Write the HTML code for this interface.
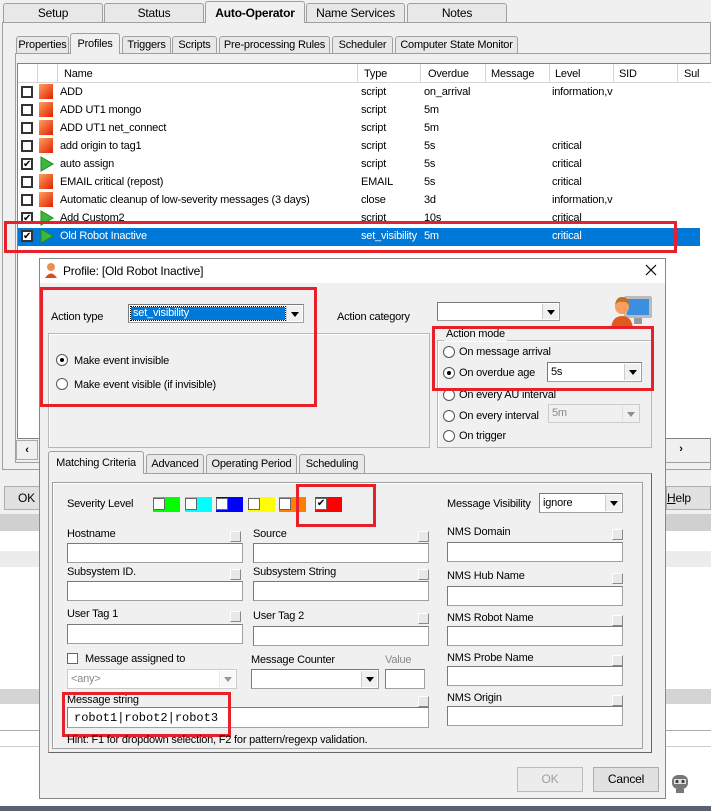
<!DOCTYPE html>
<html><head><meta charset="utf-8"><style>
*{box-sizing:border-box;margin:0;padding:0}
body{width:711px;height:811px;overflow:hidden;background:#f0f0f0;font-family:"Liberation Sans",sans-serif;font-size:11px;letter-spacing:-0.2px;color:#000;position:relative}
.a{position:absolute}
.t{position:absolute;white-space:nowrap;line-height:14px}
.tab{position:absolute;border:1px solid #a0a0a0;border-bottom:none;background:#e8e8e8;text-align:center;border-radius:3px 3px 0 0;white-space:nowrap;overflow:hidden}
.inp{position:absolute;background:#fff;border:1px solid #a0a0a0;border-top-color:#7a7a7a;border-left-color:#7a7a7a}
.cb{position:absolute;width:11px;height:11px;border:1px solid #333;background:#fff}
.sq{position:absolute;width:11px;height:11px;background:#e8e8e8;border:1px solid #fff;border-right-color:#888;border-bottom-color:#888}
.arr{position:absolute;top:1px;right:1px;bottom:1px;width:16px;background:#f0f0f0;border-left:1px solid #ccc}
.arr:after{content:"";position:absolute;left:4px;top:50%;margin-top:-2px;border:4px solid transparent;border-top:5px solid #000;border-bottom:none}
.rad{position:absolute;width:12px;height:12px;border-radius:50%;border:1px solid #555;background:#fff}
.rad.on:after{content:"";position:absolute;left:3px;top:3px;width:4px;height:4px;border-radius:50%;background:#000}
.red{position:absolute;border:3px solid #e8202a}
.row{position:absolute;left:18px;width:682px;height:18px}
.grp{position:absolute;border:1px solid #b8b8b8;box-shadow:1px 1px 0 #fff inset}
.btn{position:absolute;background:#e1e1e1;border:1px solid #adadad;text-align:center;line-height:23px;white-space:nowrap}
</style></head><body>
<!-- top tabs -->
<div class="a" style="left:2px;top:22px;width:709px;height:448px;border:1px solid #a0a0a0;background:#f0f0f0"></div>
<div class="tab" style="left:3px;top:3px;width:100px;height:19px;line-height:18px;font-size:12px">Setup</div>
<div class="tab" style="left:104px;top:3px;width:100px;height:19px;line-height:18px;font-size:12px">Status</div>
<div class="tab" style="left:407px;top:3px;width:100px;height:19px;line-height:18px;font-size:12px">Notes</div>
<div class="tab" style="left:306px;top:3px;width:99px;height:19px;line-height:18px;font-size:12px">Name Services</div>
<div class="tab" style="left:205px;top:1px;width:100px;height:22px;background:#f0f0f0;font-weight:bold;line-height:22px;font-size:12px;z-index:2">Auto-Operator</div>
<!-- sub tabs -->
<div class="a" style="left:15px;top:53px;width:696px;height:410px;border:1px solid #a0a0a0;border-right:none"></div>
<div class="tab" style="left:16px;top:36px;width:53px;height:17px;line-height:16px">Properties</div>
<div class="tab" style="left:70px;top:33px;width:50px;height:21px;background:#f0f0f0;line-height:20px;z-index:2">Profiles</div>
<div class="tab" style="left:122px;top:36px;width:49px;height:17px;line-height:16px">Triggers</div>
<div class="tab" style="left:172px;top:36px;width:45px;height:17px;line-height:16px">Scripts</div>
<div class="tab" style="left:219px;top:36px;width:111px;height:17px;line-height:16px">Pre-processing Rules</div>
<div class="tab" style="left:332px;top:36px;width:61px;height:17px;line-height:16px">Scheduler</div>
<div class="tab" style="left:395px;top:36px;width:123px;height:17px;line-height:16px">Computer State Monitor</div>
<!-- list -->
<div class="a" style="left:17px;top:63px;width:694px;height:376px;background:#fff;border:1px solid #828282;border-right:none"></div>
<div class="a" style="left:18px;top:64px;width:693px;height:19px;background:#fff;border-bottom:1px solid #d5d5d5"></div>
<div class="a" style="left:37px;top:64px;width:1px;height:19px;background:#d5d5d5"></div>
<div class="a" style="left:57px;top:64px;width:1px;height:19px;background:#d5d5d5"></div>
<div class="t" style="left:64px;top:67px">Name</div>
<div class="a" style="left:357px;top:64px;width:1px;height:19px;background:#d5d5d5"></div><div class="t" style="left:364px;top:67px">Type</div>
<div class="a" style="left:420px;top:64px;width:1px;height:19px;background:#d5d5d5"></div><div class="t" style="left:428px;top:67px">Overdue</div>
<div class="a" style="left:485px;top:64px;width:1px;height:19px;background:#d5d5d5"></div><div class="t" style="left:491px;top:67px">Message</div>
<div class="a" style="left:549px;top:64px;width:1px;height:19px;background:#d5d5d5"></div><div class="t" style="left:555px;top:67px">Level</div>
<div class="a" style="left:613px;top:64px;width:1px;height:19px;background:#d5d5d5"></div><div class="t" style="left:619px;top:67px">SID</div>
<div class="a" style="left:677px;top:64px;width:1px;height:19px;background:#d5d5d5"></div><div class="t" style="left:684px;top:67px">Sul</div>

<div class="row" style="top:228px;background:#0078d7"></div>
<!-- rows -->
<div class="cb" style="left:21px;top:86px;border-width:2px;width:12px;height:12px"></div><div class="a" style="left:39px;top:84px;width:14px;height:15px;background:linear-gradient(135deg,#ffa060,#e02000)"></div><div class="t" style="left:60px;top:85px">ADD</div><div class="t" style="left:361px;top:85px">script</div><div class="t" style="left:424px;top:85px">on_arrival</div><div class="t" style="left:552px;top:85px">information,v</div>
<div class="cb" style="left:21px;top:104px;border-width:2px;width:12px;height:12px"></div><div class="a" style="left:39px;top:102px;width:14px;height:15px;background:linear-gradient(135deg,#ffa060,#e02000)"></div><div class="t" style="left:60px;top:103px">ADD UT1 mongo</div><div class="t" style="left:361px;top:103px">script</div><div class="t" style="left:424px;top:103px">5m</div>
<div class="cb" style="left:21px;top:122px;border-width:2px;width:12px;height:12px"></div><div class="a" style="left:39px;top:120px;width:14px;height:15px;background:linear-gradient(135deg,#ffa060,#e02000)"></div><div class="t" style="left:60px;top:121px">ADD UT1 net_connect</div><div class="t" style="left:361px;top:121px">script</div><div class="t" style="left:424px;top:121px">5m</div>
<div class="cb" style="left:21px;top:140px;border-width:2px;width:12px;height:12px"></div><div class="a" style="left:39px;top:138px;width:14px;height:15px;background:linear-gradient(135deg,#ffa060,#e02000)"></div><div class="t" style="left:60px;top:139px">add origin to tag1</div><div class="t" style="left:361px;top:139px">script</div><div class="t" style="left:424px;top:139px">5s</div><div class="t" style="left:552px;top:139px">critical</div>
<div class="cb" style="left:21px;top:158px;border-width:2px;width:12px;height:12px;font-size:10px;line-height:9px;text-align:center">✔</div><svg class="a" style="left:40px;top:156px" width="14" height="16"><path d="M1 1 L13 8 L1 15Z" fill="#3cb83c" stroke="#1f8a1f"/></svg><div class="t" style="left:60px;top:157px">auto assign</div><div class="t" style="left:361px;top:157px">script</div><div class="t" style="left:424px;top:157px">5s</div><div class="t" style="left:552px;top:157px">critical</div>
<div class="cb" style="left:21px;top:176px;border-width:2px;width:12px;height:12px"></div><div class="a" style="left:39px;top:174px;width:14px;height:15px;background:linear-gradient(135deg,#ffa060,#e02000)"></div><div class="t" style="left:60px;top:175px">EMAIL critical (repost)</div><div class="t" style="left:361px;top:175px">EMAIL</div><div class="t" style="left:424px;top:175px">5s</div><div class="t" style="left:552px;top:175px">critical</div>
<div class="cb" style="left:21px;top:194px;border-width:2px;width:12px;height:12px"></div><div class="a" style="left:39px;top:192px;width:14px;height:15px;background:linear-gradient(135deg,#ffa060,#e02000)"></div><div class="t" style="left:60px;top:193px">Automatic cleanup of low-severity messages (3 days)</div><div class="t" style="left:361px;top:193px">close</div><div class="t" style="left:424px;top:193px">3d</div><div class="t" style="left:552px;top:193px">information,v</div>
<div class="cb" style="left:21px;top:212px;border-width:2px;width:12px;height:12px;font-size:10px;line-height:9px;text-align:center">✔</div><svg class="a" style="left:40px;top:210px" width="14" height="16"><path d="M1 1 L13 8 L1 15Z" fill="#3cb83c" stroke="#1f8a1f"/></svg><div class="t" style="left:60px;top:211px">Add Custom2</div><div class="t" style="left:361px;top:211px">script</div><div class="t" style="left:424px;top:211px">10s</div><div class="t" style="left:552px;top:211px">critical</div>
<div class="cb" style="left:21px;top:230px;border-width:2px;width:12px;height:12px;font-size:10px;line-height:9px;text-align:center">✔</div><svg class="a" style="left:40px;top:228px" width="14" height="16"><path d="M1 1 L13 8 L1 15Z" fill="#3cb83c" stroke="#1f8a1f"/></svg>
<div class="t" style="left:60px;top:229px;color:#fff">Old Robot Inactive</div><div class="t" style="left:361px;top:229px;color:#fff">set_visibility</div><div class="t" style="left:424px;top:229px;color:#fff">5m</div><div class="t" style="left:552px;top:229px;color:#fff">critical</div>
<div class="red" style="left:4px;top:221px;width:673px;height:32px"></div>

<!-- background left/right of dialog -->
<div class="a" style="left:16px;top:440px;width:22px;height:20px;border:1px solid #aaa;background:#f0f0f0;text-align:center;line-height:18px;font-weight:bold">‹</div>
<div class="a" style="left:666px;top:440px;width:30px;height:20px;text-align:center;line-height:18px;font-weight:bold">›</div>
<div class="btn" style="left:4px;top:486px;width:60px;height:24px;text-align:right;padding-right:28px;font-size:12px">OK</div>
<div class="btn" style="left:666px;top:486px;width:45px;height:24px;text-align:left;padding-left:0;font-size:12px"><u>H</u>elp</div>
<div class="a" style="left:0;top:514px;width:711px;height:17px;background:#d0d0d0"></div>
<div class="a" style="left:0;top:531px;width:711px;height:275px;background:#fff"></div>
<div class="a" style="left:0;top:551px;width:711px;height:16px;background:#ececec"></div>
<div class="a" style="left:0;top:689px;width:711px;height:15px;background:#d4d4d4"></div>
<div class="a" style="left:0;top:730px;width:711px;height:1px;background:#aaa"></div>
<div class="a" style="left:0;top:746px;width:711px;height:1px;background:#ccc"></div>
<div class="a" style="left:0;top:806px;width:711px;height:5px;background:#5a6270"></div>
<svg class="a" style="left:669px;top:771px" width="22" height="24"><rect x="3" y="4" width="16" height="14" rx="6" fill="#777"/><rect x="5" y="8" width="12" height="5" fill="#ddd"/><circle cx="8" cy="10.5" r="1.5" fill="#333"/><circle cx="14" cy="10.5" r="1.5" fill="#333"/><rect x="7" y="18" width="8" height="4" fill="#777"/></svg>

<!-- dialog -->
<div class="a" style="left:39px;top:258px;width:627px;height:541px;background:#f0f0f0;border:1px solid #888"></div>
<div class="a" style="left:40px;top:259px;width:625px;height:24px;background:#fff"></div>
<svg class="a" style="left:44px;top:262px" width="14" height="16"><circle cx="7" cy="5" r="4" fill="#e99050"/><path d="M1 16 Q7 7 13 16Z" fill="#d05020"/></svg>
<div class="t" style="left:63px;top:264px;font-size:12px">Profile: [Old Robot Inactive]</div>
<svg class="a" style="left:645px;top:264px" width="12" height="12"><path d="M1 1L11 11M11 1L1 11" stroke="#000" stroke-width="1.2"/></svg>

<div class="t" style="left:51px;top:310px">Action type</div>
<div class="inp" style="left:128px;top:304px;width:176px;height:19px"><div class="a" style="left:2px;top:2px;width:154px;height:13px;background:#0078d7;outline:1px dotted #000"></div><div class="t" style="left:4px;top:1px;color:#fff">set_visibility</div><div class="arr"></div></div>
<div class="t" style="left:337px;top:310px">Action category</div>
<div class="inp" style="left:437px;top:302px;width:123px;height:19px"><div class="arr"></div></div>
<svg class="a" style="left:608px;top:291px" width="50" height="38"><rect x="16" y="5" width="28" height="22" rx="2" fill="#bbb"/><rect x="19" y="8" width="22" height="16" fill="#3b8fe0"/><rect x="26" y="27" width="8" height="6" fill="#999"/><circle cx="14" cy="16" r="7" fill="#f5a060"/><path d="M7 14 Q8 6 14 6 Q21 6 21 14 Q18 10 14 11 Q10 10 7 14Z" fill="#c07020"/><path d="M3 38 Q4 25 14 25 Q24 25 25 38Z" fill="#e05a20"/></svg>

<div class="grp" style="left:48px;top:333px;width:382px;height:115px"></div>
<div class="rad on" style="left:56px;top:354px"></div><div class="t" style="left:74px;top:354px">Make event invisible</div>
<div class="rad" style="left:56px;top:378px"></div><div class="t" style="left:74px;top:378px">Make event visible (if invisible)</div>
<div class="red" style="left:40px;top:287px;width:277px;height:120px"></div>

<div class="grp" style="left:437px;top:340px;width:215px;height:108px"></div>
<div class="t" style="left:444px;top:327px;background:#f0f0f0;padding:0 2px">Action mode</div>
<div class="rad" style="left:443px;top:346px"></div><div class="t" style="left:459px;top:345px">On message arrival</div>
<div class="rad on" style="left:443px;top:367px"></div><div class="t" style="left:459px;top:366px">On overdue age</div>
<div class="inp" style="left:547px;top:362px;width:95px;height:20px"><div class="t" style="left:3px;top:2px">5s</div><div class="arr"></div></div>
<div class="rad" style="left:443px;top:389px"></div><div class="t" style="left:459px;top:388px">On every AU interval</div>
<div class="rad" style="left:443px;top:410px"></div><div class="t" style="left:459px;top:409px">On every interval</div>
<div class="inp" style="left:548px;top:404px;width:92px;height:19px;background:#f0f0f0;border-color:#ccc"><div class="t" style="left:3px;top:1px;color:#888">5m</div><div class="arr" style="opacity:.4"></div></div>
<div class="rad" style="left:443px;top:430px"></div><div class="t" style="left:459px;top:429px">On trigger</div>
<div class="red" style="left:432px;top:326px;width:222px;height:65px"></div>

<!-- dialog tabs -->
<div class="a" style="left:48px;top:473px;width:604px;height:280px;border:1px solid #a0a0a0;border-right-color:#666;border-bottom-color:#666"></div>
<div class="tab" style="left:48px;top:451px;width:96px;height:23px;background:#f0f0f0;line-height:22px;z-index:2">Matching Criteria</div>
<div class="tab" style="left:146px;top:454px;width:58px;height:19px;line-height:19px">Advanced</div>
<div class="tab" style="left:206px;top:454px;width:91px;height:19px;line-height:19px">Operating Period</div>
<div class="tab" style="left:299px;top:454px;width:66px;height:19px;line-height:19px">Scheduling</div>
<div class="a" style="left:52px;top:482px;width:591px;height:267px;border:1px solid #a0a0a0;box-shadow:1px 1px 0 #fff inset"></div>

<div class="t" style="left:67px;top:497px">Severity Level</div>
<div class="a" style="left:153px;top:497px;width:27px;height:15px;background:#00ff00"></div><div class="cb" style="left:153px;top:498px;width:12px;height:12px;border-color:#666"></div>
<div class="a" style="left:185px;top:497px;width:27px;height:15px;background:#00ffff"></div><div class="cb" style="left:185px;top:498px;width:12px;height:12px;border-color:#666"></div>
<div class="a" style="left:216px;top:497px;width:27px;height:15px;background:#0000ff"></div><div class="cb" style="left:216px;top:498px;width:12px;height:12px;border-color:#666"></div>
<div class="a" style="left:248px;top:497px;width:27px;height:15px;background:#ffff00"></div><div class="cb" style="left:248px;top:498px;width:12px;height:12px;border-color:#666"></div>
<div class="a" style="left:279px;top:497px;width:27px;height:15px;background:#ff8000"></div><div class="cb" style="left:279px;top:498px;width:12px;height:12px;border-color:#666"></div>
<div class="a" style="left:315px;top:497px;width:27px;height:15px;background:#ff0000"></div><div class="cb" style="left:315px;top:498px;width:12px;height:12px;border-color:#666;font-size:10px;line-height:10px;text-align:center">✔</div>
<div class="red" style="left:296px;top:484px;width:80px;height:43px"></div>
<div class="t" style="left:447px;top:497px">Message Visibility</div>
<div class="inp" style="left:539px;top:493px;width:84px;height:20px"><div class="t" style="left:3px;top:2px">ignore</div><div class="arr"></div></div>

<div class="t" style="left:67px;top:527px">Hostname</div><div class="sq" style="left:230px;top:531px"></div><div class="inp" style="left:67px;top:543px;width:176px;height:20px"></div>
<div class="t" style="left:253px;top:527px">Source</div><div class="sq" style="left:418px;top:531px"></div><div class="inp" style="left:253px;top:543px;width:176px;height:20px"></div>
<div class="t" style="left:447px;top:525px">NMS Domain</div><div class="sq" style="left:612px;top:529px"></div><div class="inp" style="left:447px;top:542px;width:176px;height:20px"></div>

<div class="t" style="left:67px;top:565px">Subsystem ID.</div><div class="sq" style="left:230px;top:569px"></div><div class="inp" style="left:67px;top:581px;width:176px;height:20px"></div>
<div class="t" style="left:253px;top:565px">Subsystem String</div><div class="sq" style="left:418px;top:569px"></div><div class="inp" style="left:253px;top:581px;width:176px;height:20px"></div>
<div class="t" style="left:447px;top:569px">NMS Hub Name</div><div class="sq" style="left:612px;top:573px"></div><div class="inp" style="left:447px;top:586px;width:176px;height:20px"></div>

<div class="t" style="left:67px;top:607px">User Tag 1</div><div class="sq" style="left:230px;top:611px"></div><div class="inp" style="left:67px;top:624px;width:176px;height:20px"></div>
<div class="t" style="left:253px;top:609px">User Tag 2</div><div class="sq" style="left:418px;top:613px"></div><div class="inp" style="left:253px;top:626px;width:176px;height:20px"></div>
<div class="t" style="left:447px;top:611px">NMS Robot Name</div><div class="sq" style="left:612px;top:615px"></div><div class="inp" style="left:447px;top:626px;width:176px;height:20px"></div>

<div class="cb" style="left:67px;top:653px;border-color:#666"></div><div class="t" style="left:85px;top:652px">Message assigned to</div>
<div class="inp" style="left:67px;top:669px;width:170px;height:20px;border-color:#ccc"><div class="t" style="left:3px;top:2px;color:#888">&lt;any&gt;</div><div class="arr" style="opacity:.4"></div></div>
<div class="t" style="left:251px;top:653px">Message Counter</div>
<div class="inp" style="left:251px;top:669px;width:128px;height:20px"><div class="arr"></div></div>
<div class="t" style="left:385px;top:653px;color:#888">Value</div>
<div class="inp" style="left:385px;top:669px;width:40px;height:20px"></div>
<div class="t" style="left:447px;top:651px">NMS Probe Name</div><div class="sq" style="left:612px;top:655px"></div><div class="inp" style="left:447px;top:666px;width:176px;height:20px"></div>

<div class="t" style="left:67px;top:693px">Message string</div><div class="sq" style="left:418px;top:696px"></div>
<div class="inp" style="left:67px;top:707px;width:362px;height:21px"><div class="t" style="left:6px;top:3px;font-family:'Liberation Mono',monospace;font-size:12px;letter-spacing:0;color:#000">robot1|robot2|robot3</div></div>
<div class="red" style="left:62px;top:692px;width:169px;height:45px"></div>
<div class="t" style="left:447px;top:691px">NMS Origin</div><div class="sq" style="left:612px;top:695px"></div><div class="inp" style="left:447px;top:706px;width:176px;height:20px"></div>
<div class="t" style="left:67px;top:733px">Hint: F1 for dropdown selection, F2 for pattern/regexp validation.</div>

<div class="btn" style="left:517px;top:767px;width:66px;height:25px;color:#a0a0a0;background:#ececec;border-color:#bbb;font-size:12px">OK</div>
<div class="btn" style="left:593px;top:767px;width:66px;height:25px;font-size:12px">Cancel</div>
</body></html>
